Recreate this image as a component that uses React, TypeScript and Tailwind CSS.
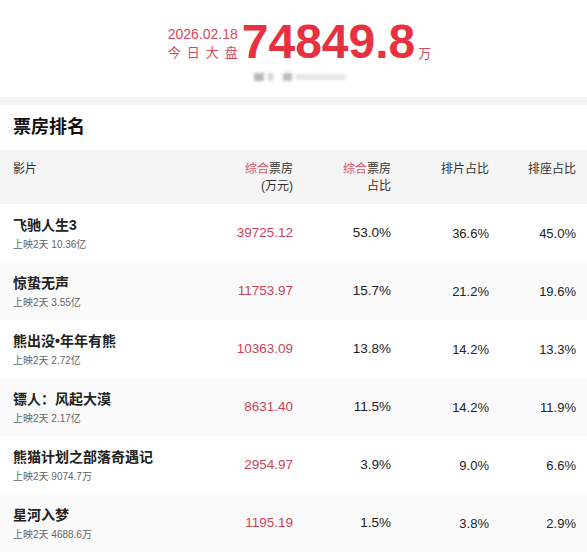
import React from "react";

const rows = [
  { name: "飞驰人生3", sub: "上映2天 10.36亿", box: "39725.12", a: "53.0%", b: "36.6%", c: "45.0%" },
  { name: "惊蛰无声", sub: "上映2天 3.55亿", box: "11753.97", a: "15.7%", b: "21.2%", c: "19.6%" },
  { name: "熊出没•年年有熊", sub: "上映2天 2.72亿", box: "10363.09", a: "13.8%", b: "14.2%", c: "13.3%" },
  { name: "镖人：风起大漠", sub: "上映2天 2.17亿", box: "8631.40", a: "11.5%", b: "14.2%", c: "11.9%" },
  { name: "熊猫计划之部落奇遇记", sub: "上映2天 9074.7万", box: "2954.97", a: "3.9%", b: "9.0%", c: "6.6%" },
  { name: "星河入梦", sub: "上映2天 4688.6万", box: "1195.19", a: "1.5%", b: "3.8%", c: "2.9%" },
];

const font = { fontFamily: '"Liberation Sans", "Noto Sans CJK SC", sans-serif' };

export default function App() {
  return (
    <div className="w-[587px] h-[552px] overflow-hidden bg-white text-[#222]" style={font}>
      {/* top */}
      <div className="h-[97px] bg-white flex flex-col items-center">
        <div className="flex items-end pt-[18px] pl-[12px]">
          <div className="flex flex-col items-end mr-[4px] mb-[4px]">
            <div className="text-[14px] leading-[20px] text-[#d24a5c]">2026.02.18</div>
            <div className="text-[13px] leading-[18px] text-[#d24a5c] tracking-[6px] mr-[-6px]">今日大盘</div>
          </div>
          <div className="text-[48px] leading-[48px] font-bold text-[#e8313f]">74849.8</div>
          <div className="text-[13px] leading-[16px] text-[#d24a5c] ml-[3px] mb-[4px]">万</div>
        </div>
        <div className="flex items-center gap-[4px] mt-[6px] ml-[12px] h-[10px] blur-[1.5px] opacity-70">
          <div className="w-[10px] h-[8px] bg-[#9a9a9a]" />
          <div className="w-[5px] h-[8px] bg-[#c0c0c0]" />
          <div className="w-[9px] h-[8px] bg-[#a0a0a0] ml-[6px]" />
          <div className="w-[50px] h-[6px] bg-[#dcdcdc]" />
        </div>
      </div>
      <div className="h-[8px] bg-[#f3f3f3]" />
      {/* title */}
      <div className="h-[45px] flex items-center pl-[13px] pb-[1px]">
        <span className="text-[18px] font-bold text-[#111] leading-[24px]">票房排名</span>
      </div>
      {/* header */}
      <div className="h-[54px] bg-[#f5f5f5] grid grid-cols-[1fr_98px_98px_98px_87px] pl-[13px] pr-[11px] pt-[11px] text-[12px] leading-[17px] text-[#333]">
        <div>影片</div>
        <div className="text-right">
          <span className="text-[#d9506a]">综合</span>票房
          <br />
          (万元)
        </div>
        <div className="text-right">
          <span className="text-[#d9506a]">综合</span>票房
          <br />
          占比
        </div>
        <div className="text-right">排片占比</div>
        <div className="text-right">排座占比</div>
      </div>
      {rows.map((r, i) => (
        <div
          key={r.name}
          className={`h-[58px] grid grid-cols-[1fr_98px_98px_98px_87px] items-center pl-[13px] pr-[11px] ${i % 2 === 1 ? "bg-[#fafafa]" : "bg-white"}`}
        >
          <div className="flex flex-col">
            <div className="text-[14px] leading-[20px] font-bold text-[#222]">{r.name}</div>
            <div className="text-[10px] leading-[14px] text-[#666] mt-[3px]">{r.sub}</div>
          </div>
          <div className="text-right text-[13.5px] text-[#cc4459] pt-[1px]">{r.box}</div>
          <div className="text-right text-[13.5px] text-[#222] pt-[1px]">{r.a}</div>
          <div className="text-right text-[13px] text-[#222] pt-[1px]">{r.b}</div>
          <div className="text-right text-[13px] text-[#222] pt-[1px]">{r.c}</div>
        </div>
      ))}
    </div>
  );
}
